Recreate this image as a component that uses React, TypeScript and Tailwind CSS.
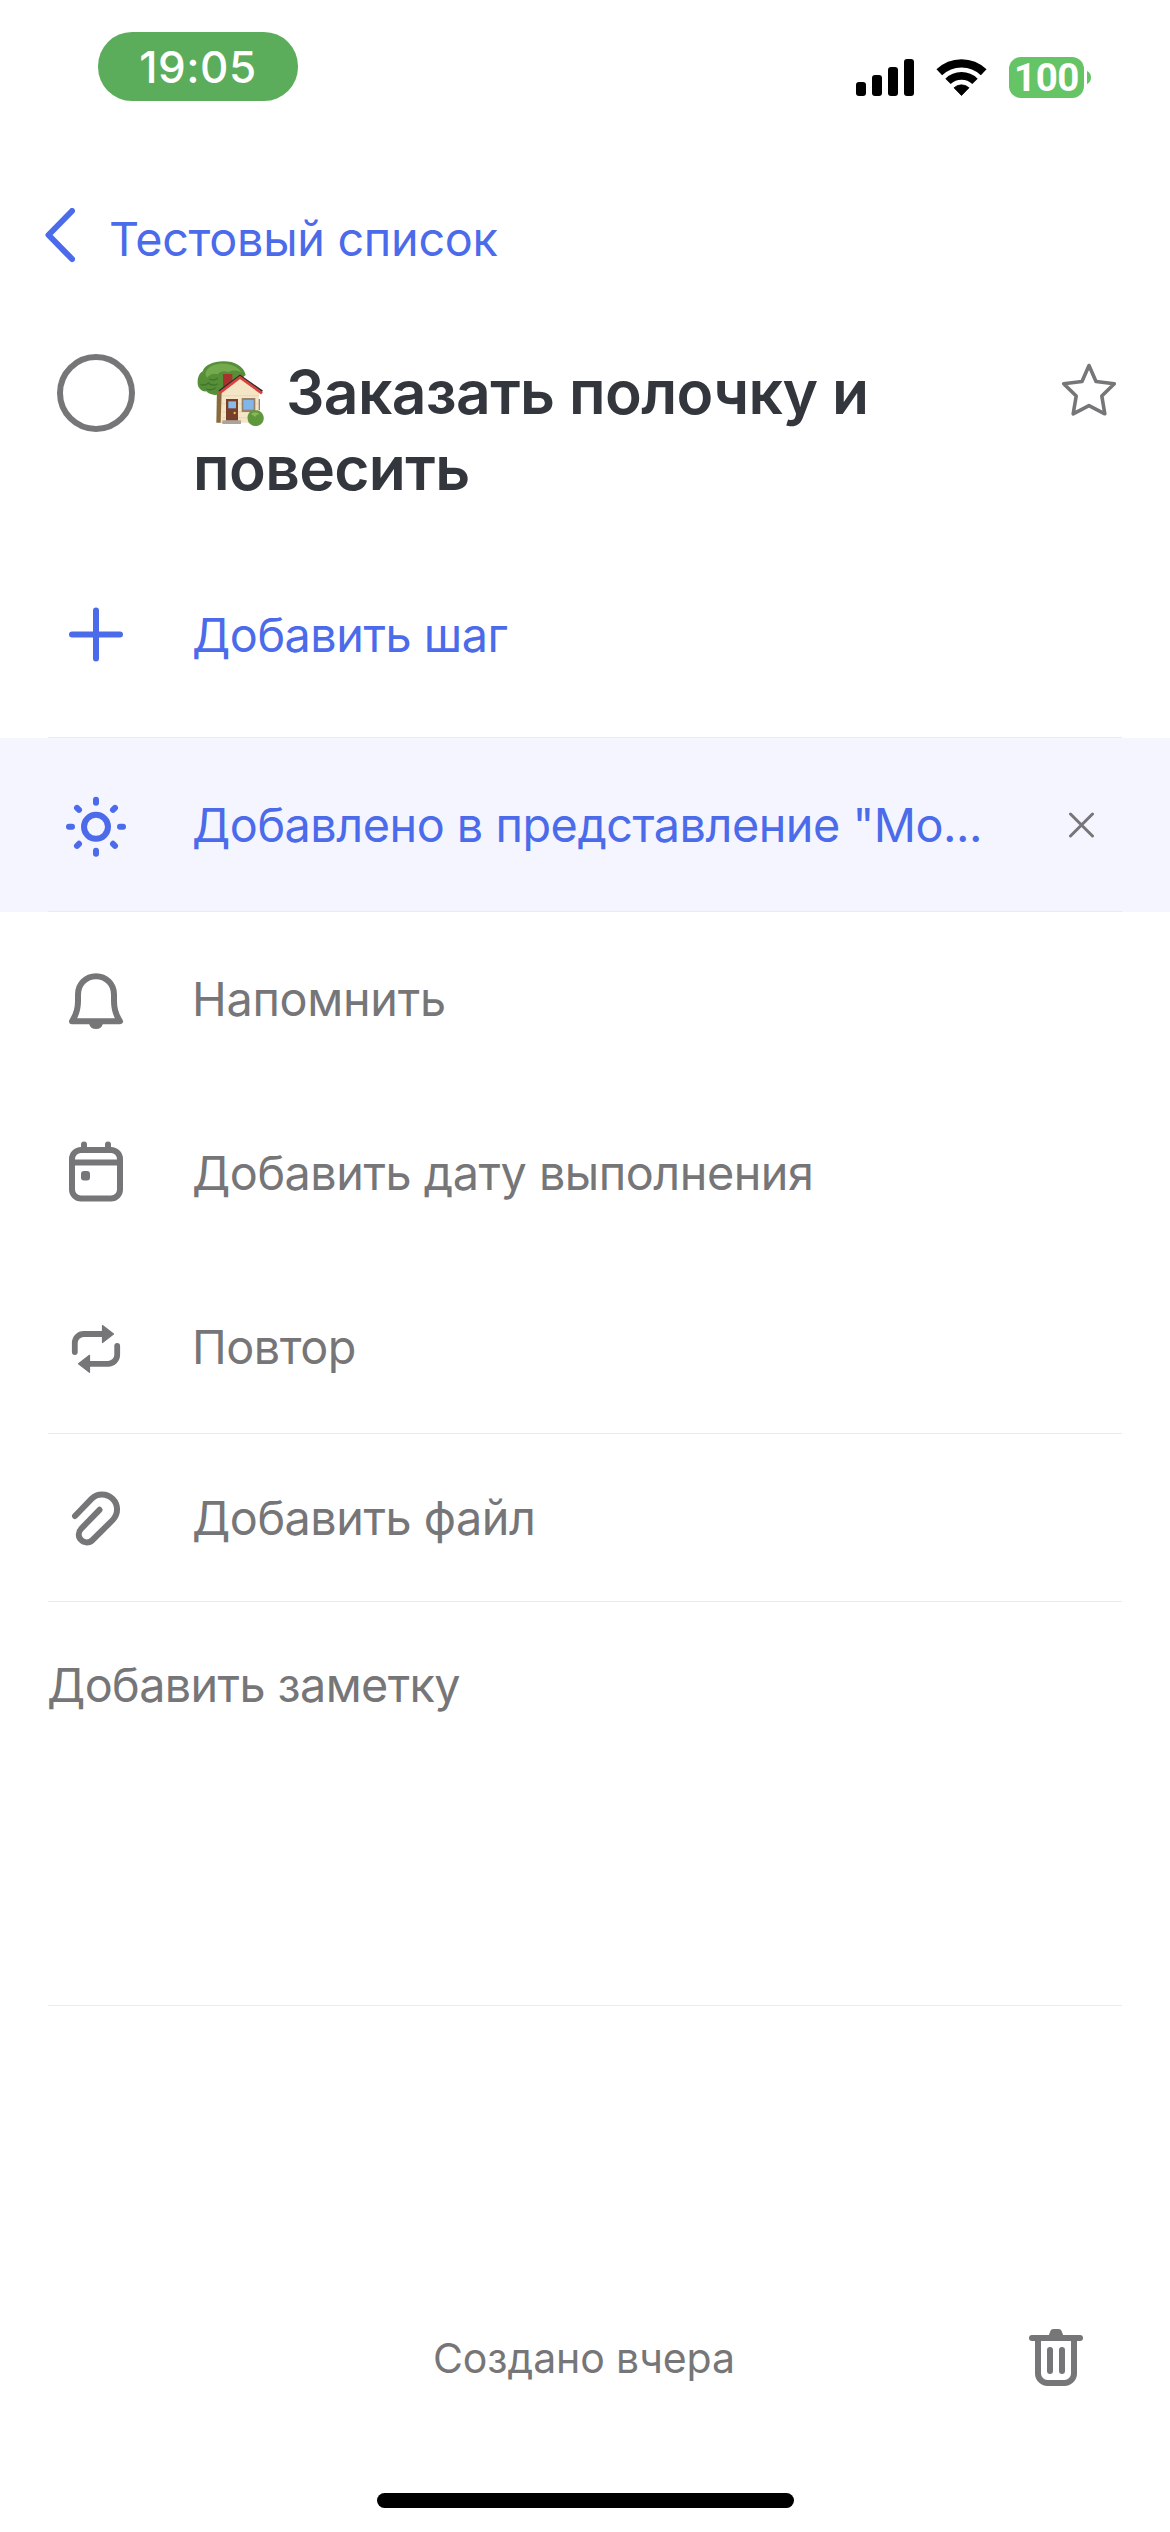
import type { ReactNode } from "react";

const GRAY = "#767678";
const BLUE = "#4b6bea";

function StatusBar() {
  return (
    <header className="flex h-[178px] items-start justify-between pr-[79px] pl-[98px]">
      <div className="mt-8 flex h-[69px] w-[200px] items-center justify-center rounded-[34px] bg-[#5bad5c] text-[44px] font-medium tracking-[0.5px] text-white">
        19:05
      </div>
      <div className="mt-[57px] flex items-start">
        <svg width="58" height="41" viewBox="856 57 58 41" className="mr-[22px]">
          <rect x="856" y="82" width="10" height="14" rx="3" />
          <rect x="872" y="75" width="10" height="21" rx="3" />
          <rect x="888" y="67" width="10" height="29" rx="3" />
          <rect x="904" y="59" width="10" height="37" rx="3" />
        </svg>
        <svg width="52" height="41" viewBox="936 57 52 41" className="mr-[21px]" fill="none" stroke="#000">
          <path d="M939.3 72.3a32 32 0 0 1 44.4 0" strokeWidth="8.2" />
          <path d="M948 81.4a19.3 19.3 0 0 1 27 0" strokeWidth="7.6" />
          <path d="M954 87.8a11 11 0 0 1 15 0l-7.5 7.7z" fill="#000" strokeWidth="0.8" strokeLinejoin="round" />
        </svg>
        <div className="flex h-[41px] w-[75px] items-center justify-center rounded-[12px] bg-[#65c466] pt-px font-[Roboto,sans-serif] text-[38.500px] font-bold text-white">
          100
        </div>
        <svg width="4" height="41" viewBox="0 0 4 41" className="ml-[3px]">
          <path d="M0 14c2.500 1 4 3.500 4 6.500s-1.500 5.500-4 6.500z" fill="#65c466" />
        </svg>
      </div>
    </header>
  );
}

function HouseEmoji() {
  return (
    <svg width="67" height="65" viewBox="470 62 201 195" className="mr-[22px] ml-[4px] inline-block align-[-12px]">
      <path d="M530 140h20l2 107h-24z" fill="#8a6a3c" />
      <path
        d="M548 63C580 62 610 76 616 104L562 150 540 160C524 168 506 162 498 153 484 155 470 141 472 124 472 108 479 98 487 93 493 74 520 63 548 63Z"
        fill="#568f38"
      />
      <path d="M500 88c12-16 42-22 66-16 16 4 30 12 38 24-18-8-30-6-40 0-12-6-24-2-32 6-10-4-24 0-32 10-6-8-6-16 0-24z" fill="#74a94d" />
      <path d="M480 132c10 4 18 2 24-4 8 8 20 8 28 2M506 116c8 4 18 4 26-2M498 146c10 4 20 2 28-4" fill="none" stroke="#40752c" strokeWidth="4" />
      <path d="M548 101h28v26l-28 22z" fill="#a8322c" />
      <path d="M544 156l55-44 57 44v91H541z" fill="#f4e5c6" />
      <path d="M545 166h110M545 190h110M545 215h110M545 232h110" stroke="#e4d2ae" strokeWidth="2" />
      <path d="M536 153l63-47 67 47" fill="none" stroke="#2d2b33" strokeWidth="6" />
      <path d="M536 159l63-48 66 48" fill="none" stroke="#d8443c" strokeWidth="8" />
      <path d="M655 176h4v34h-4z" fill="#9c8468" />
      <path d="M546 240h56v11h-56z" fill="#aaa49c" />
      <path d="M557 176h36v64h-36z" fill="#77402c" />
      <path d="M564 183h23v21h-23z" fill="#86bdec" />
      <circle cx="583" cy="218" r="3.500" fill="#f0c64a" />
      <path d="M604 173h41v42h-41z" fill="#97816a" />
      <path d="M609 179h31v29h-31z" fill="#82b6e8" />
      <path d="M624 222c4-10 14-14 22-12 12 0 22 8 24 20 2 14-8 26-22 27-12 0-22-6-25-16-2-8-2-14 1-19z" fill="#5f983c" />
      <path d="M632 222c6-8 18-8 26 0-8 0-10 4-14 8-4-4-8-6-12-8z" fill="#86b85a" />
    </svg>
  );
}

function RowIcon({ center, color = GRAY, children }: { center: number; color?: string; children: ReactNode }) {
  return (
    <svg
      width="72"
      height="72"
      viewBox={`60 ${center - 36} 72 72`}
      className="mr-[60px] ml-[60px] shrink-0"
      fill="none"
      stroke={color}
      strokeWidth="6"
      strokeLinecap="round"
      strokeLinejoin="round"
    >
      {children}
    </svg>
  );
}

function Divider() {
  return <div className="mr-12 ml-12 h-px shrink-0 bg-[#ebebed]" />;
}

export default function App() {
  return (
    <div className="flex h-[2532px] w-[1170px] flex-col overflow-hidden bg-white font-[Inter,sans-serif] text-[46.750px] leading-none tracking-[-0.480px] whitespace-nowrap text-[#767678]">
      <StatusBar />

      <nav className="flex h-[122px] items-center text-[#4b6bea]">
        <svg
          width="30"
          height="62"
          viewBox="45 208 30 62"
          className="mr-[34px] ml-[45px]"
          fill="none"
          stroke={BLUE}
          strokeWidth="6"
          strokeLinecap="round"
          strokeLinejoin="round"
        >
          <path d="M72 211l-23.500 24 23.500 24" />
        </svg>
        <span className="tracking-[-0.300px]">Тестовый список</span>
      </nav>

      <section className="flex h-[232px] items-start pt-[54px]">
        <div className="ml-[57px] h-[78px] w-[78px] shrink-0 rounded-full border-[6px] border-[#767678]" />
        <h1 className="ml-[58px] w-[800px] text-[60.500px] leading-[76px] font-semibold tracking-[-0.650px] text-[#33373d]">
          <HouseEmoji />
          Заказать полочку и<br />
          повесить
        </h1>
        <svg
          width="56"
          height="56"
          viewBox="1061 362 56 56"
          className="mt-2 ml-[68px] shrink-0"
          fill="none"
          stroke={GRAY}
          strokeWidth="3.600"
          strokeLinejoin="round"
        >
          <path d="M1089 365.500L1096 381.500L1114.300 383.700L1101.800 396L1104.800 413.800L1089 405.600L1073.200 413.800L1076.200 396L1063.700 383.700L1082 381.500Z" />
        </svg>
      </section>

      <div className="flex h-[205px] items-center text-[#4b6bea]">
        <RowIcon center={634.5} color={BLUE}>
          <path d="M96 610v48M72 634h48" />
        </RowIcon>
        <span className="pt-px">Добавить шаг</span>
      </div>
      <Divider />

      <div className="flex h-[174px] flex-col bg-[#f4f5ff] text-[#4b6bea]">
        <div className="flex h-[173px] items-center">
          <RowIcon center={824.5} color={BLUE}>
            <circle cx="96" cy="826.300" r="12" />
            <path d="M96 799.300v3M96 850.300v3M69 826.300h3M120 826.300h3M77 807.400l2 2M113 843.300l2 2M115 807.400l-2 2M79 843.300l-2 2" />
          </RowIcon>
          <span className="w-[801px] pt-px">Добавлено в представление "Мо...</span>
          <svg
            width="26"
            height="26"
            viewBox="1069 811.500 26 26"
            className="ml-[76px] shrink-0"
            fill="none"
            stroke={GRAY}
            strokeWidth="3"
            strokeLinecap="round"
          >
            <path d="M1070.500 813.500l22 22M1092.500 813.500l-22 22" />
          </svg>
        </div>
        <Divider />
      </div>

      <div className="flex h-[174px] items-center">
        <RowIcon center={999}>
          <path d="M72 1021.300C76.500 1014.500 78 1008 78 1001V994.500C78 984 86 976.300 96 976.300S114 984 114 994.500V1001C114 1008 115.500 1014.500 120 1021.300Z" />
          <path d="M89 1023.500h14a7.200 7.200 0 0 1-14 0z" fill={GRAY} stroke="none" />
        </RowIcon>
        <span className="tracking-[-0.300px]">Напомнить</span>
      </div>

      <div className="flex h-[174px] items-center">
        <RowIcon center={1173}>
          <rect x="72" y="1150" width="48" height="48.500" rx="9" />
          <path d="M84 1144.500v5M108 1144.500v5" />
          <path d="M72 1162.400h48" />
          <rect x="81" y="1171" width="9" height="9.500" rx="3" fill={GRAY} stroke="none" />
        </RowIcon>
        <span>Добавить дату выполнения</span>
      </div>

      <div className="flex h-[173px] items-center">
        <RowIcon center={1346.5}>
          <path d="M74.800 1351.500V1342.500a9 9 0 0 1 9-9H103M117.200 1345.300V1354.300a9 9 0 0 1-9 9H89" strokeWidth="5.800" />
          <path d="M102.500 1325l11 8.500-11 8.500zM89.500 1354.800l-11 8.500 11 8.500z" fill={GRAY} strokeWidth="1.200" />
        </RowIcon>
        <span className="pt-px">Повтор</span>
      </div>
      <Divider />

      <div className="flex h-[167px] items-center">
        <RowIcon center={1517.5}>
          <path d="M75 1515.500L91.500 1498.300C97.300 1492.500 106.700 1492.500 112.700 1498.300C118.500 1504.200 118.500 1513.500 112.700 1519.500L92.500 1539.500C89.300 1542.700 84.300 1542.700 81.200 1539.500C78 1536.300 78 1531.600 81.200 1528.200L99.500 1509.300" />
        </RowIcon>
        <span className="pt-px">Добавить файл</span>
      </div>
      <Divider />

      <div className="h-[403px] pt-[47px] pl-[47px] leading-[72px] tracking-[-0.620px]">Добавить заметку</div>
      <Divider />

      <footer className="mt-[292px] flex h-[120px] items-center text-[41px] tracking-[-0.100px]">
        <span className="ml-[433px] w-[596px]">Создано вчера</span>
        <svg
          width="54"
          height="58"
          viewBox="1029 2328 54 58"
          fill="none"
          stroke={GRAY}
          strokeWidth="6"
          strokeLinecap="round"
        >
          <path d="M1032 2337h48" />
          <path d="M1038 2338v34.500a9.500 9.500 0 0 0 9.500 9.500h17a9.500 9.500 0 0 0 9.500-9.500V2338" />
          <path d="M1050 2349v21M1062 2349v21" />
          <path d="M1048.500 2335l1.800-4.800q.8-2.200 3-2.200h5.400q2.200 0 3 2.200l1.800 4.800z" fill={GRAY} stroke="none" />
        </svg>
      </footer>
      <div className="mt-[75px] ml-[377px] h-[15px] w-[417px] rounded-full bg-black" />
    </div>
  );
}
